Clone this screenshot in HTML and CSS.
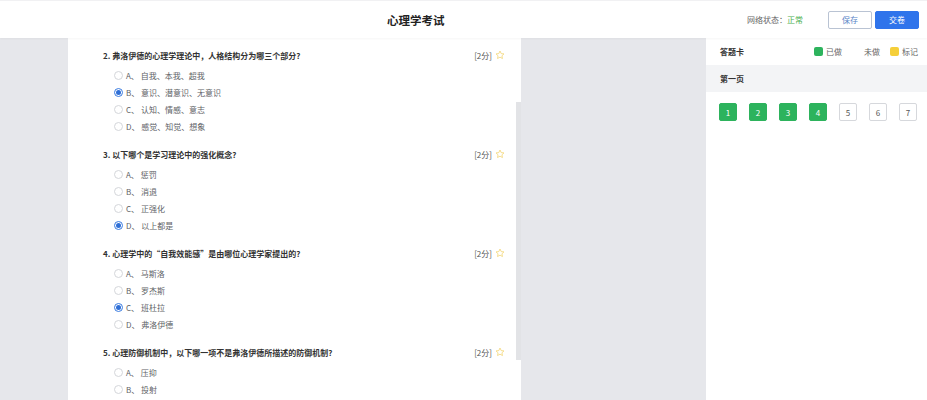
FILE: index.html
```html
<!DOCTYPE html>
<html lang="zh-CN">
<head>
  <meta charset="UTF-8">
  <title>心理学考试</title>
  <link rel="stylesheet" href="styles.css">
</head>
<body>
  <div class="header">
    <h1 class="title">心理学考试</h1>
    <div class="header-right">
      <span class="status">网络状态：<span class="ok">正常</span></span>
      <button class="btn btn-save">保存</button>
      <button class="btn btn-submit">交卷</button>
    </div>
  </div>

  <div class="main">
    <div class="side"></div>

    <div class="paper">
      <div class="paper-scroll" id="paper">
        <div class="question">
          <div class="q-head">
            <span class="q-title">1. 心理学是研究什么的科学?</span>
            <span class="score">[2分] <svg class="star" viewBox="0 0 24 24"><polygon points="12,2.5 14.9,8.6 21.5,9.4 16.6,13.9 17.9,20.5 12,17.2 6.1,20.5 7.4,13.9 2.5,9.4 9.1,8.6"/></svg></span>
          </div>
          <div class="option"><span class="radio"></span>A、 心理现象及其规律</div>
          <div class="option"><span class="radio checked"></span>B、 人的行为</div>
          <div class="option"><span class="radio"></span>C、 人的意识</div>
          <div class="option"><span class="radio"></span>D、 大脑的结构</div>
        </div>

        <div class="question">
          <div class="q-head">
            <span class="q-title">2. 弗洛伊德的心理学理论中，人格结构分为哪三个部分?</span>
            <span class="score">[2分] <svg class="star" viewBox="0 0 24 24"><polygon points="12,2.5 14.9,8.6 21.5,9.4 16.6,13.9 17.9,20.5 12,17.2 6.1,20.5 7.4,13.9 2.5,9.4 9.1,8.6"/></svg></span>
          </div>
          <div class="option"><span class="radio"></span>A、 自我、本我、超我</div>
          <div class="option"><span class="radio checked"></span>B、 意识、潜意识、无意识</div>
          <div class="option"><span class="radio"></span>C、 认知、情感、意志</div>
          <div class="option"><span class="radio"></span>D、 感觉、知觉、想象</div>
        </div>

        <div class="question">
          <div class="q-head">
            <span class="q-title">3. 以下哪个是学习理论中的强化概念?</span>
            <span class="score">[2分] <svg class="star" viewBox="0 0 24 24"><polygon points="12,2.5 14.9,8.6 21.5,9.4 16.6,13.9 17.9,20.5 12,17.2 6.1,20.5 7.4,13.9 2.5,9.4 9.1,8.6"/></svg></span>
          </div>
          <div class="option"><span class="radio"></span>A、 惩罚</div>
          <div class="option"><span class="radio"></span>B、 消退</div>
          <div class="option"><span class="radio"></span>C、 正强化</div>
          <div class="option"><span class="radio checked"></span>D、 以上都是</div>
        </div>

        <div class="question">
          <div class="q-head">
            <span class="q-title">4. 心理学中的“自我效能感”是由哪位心理学家提出的?</span>
            <span class="score">[2分] <svg class="star" viewBox="0 0 24 24"><polygon points="12,2.5 14.9,8.6 21.5,9.4 16.6,13.9 17.9,20.5 12,17.2 6.1,20.5 7.4,13.9 2.5,9.4 9.1,8.6"/></svg></span>
          </div>
          <div class="option"><span class="radio"></span>A、 马斯洛</div>
          <div class="option"><span class="radio"></span>B、 罗杰斯</div>
          <div class="option"><span class="radio checked"></span>C、 班杜拉</div>
          <div class="option"><span class="radio"></span>D、 弗洛伊德</div>
        </div>

        <div class="question">
          <div class="q-head">
            <span class="q-title">5. 心理防御机制中，以下哪一项不是弗洛伊德所描述的防御机制?</span>
            <span class="score">[2分] <svg class="star" viewBox="0 0 24 24"><polygon points="12,2.5 14.9,8.6 21.5,9.4 16.6,13.9 17.9,20.5 12,17.2 6.1,20.5 7.4,13.9 2.5,9.4 9.1,8.6"/></svg></span>
          </div>
          <div class="option"><span class="radio"></span>A、 压抑</div>
          <div class="option"><span class="radio"></span>B、 投射</div>
          <div class="option"><span class="radio"></span>C、 升华</div>
          <div class="option"><span class="radio"></span>D、 条件反射</div>
        </div>
      </div>
      <div class="scrollbar"><div class="thumb"></div></div>
    </div>

    <div class="gap"></div>

    <div class="card">
      <div class="card-head">
        <span class="card-title">答题卡</span>
        <div class="legend">
          <span class="legend-item"><span class="dot done"></span>已做</span>
          <span class="legend-item"><span class="dot todo"></span>未做</span>
          <span class="legend-item"><span class="dot mark"></span>标记</span>
        </div>
      </div>
      <div class="page-name">第一页</div>
      <div class="numbers">
        <span class="num done">1</span>
        <span class="num done">2</span>
        <span class="num done">3</span>
        <span class="num done">4</span>
        <span class="num">5</span>
        <span class="num">6</span>
        <span class="num">7</span>
      </div>
    </div>
  </div>

  <script>
    // first question is already scrolled past
    document.getElementById("paper").scrollTop = 90;
  </script>
</body>
</html>
```

FILE: styles.css
```css
* {
  box-sizing: border-box;
}
body {
  margin: 0;
  height: 400px;
  overflow: hidden;
  font-family: "Noto Sans CJK SC", "Noto Sans", sans-serif;
  font-size: 8px;
  color: #333;
  background: #e6e7eb;
}
.header {
  height: 38px;
  background: white;
  border-top: 1px solid #f1f1f3;
  display: flex;
  align-items: center;
  padding-right: 8px;
  box-shadow: 0 1px 2px rgba(0, 0, 0, 0.04);
  position: relative;
}
.title {
  margin: 0 0 0 387px;
  font-size: 11.5px;
  font-weight: bold;
  color: #222;
}
.header-right {
  margin-left: auto;
  display: flex;
  align-items: center;
}
.status {
  color: #666;
  margin-right: 22px;
}
.ok {
  color: #4caf50;
}
.btn {
  width: 44px;
  height: 18px;
  font-family: inherit;
  font-size: 8px;
  border-radius: 2px;
  padding: 0;
  margin-left: 3px;
  cursor: pointer;
}
.btn-save {
  background: white;
  color: #5a84c7;
  border: 1px solid #b9c3d3;
}
.btn-submit {
  background: #2f74eb;
  color: white;
  border: 1px solid #2f74eb;
}
.main {
  height: 362px;
  display: grid;
  grid-template-columns: 68px 453px 1fr 221px;
}
.paper {
  background: white;
  display: grid;
  grid-template-columns: 1fr 5px;
  min-height: 0;
}
.paper-scroll {
  overflow: hidden;
  padding: 0 11px 14px 35px;
}
.scrollbar {
  padding-top: 64px;
}
.thumb {
  height: 258px;
  background: #e2e3e6;
}
.question {
  height: 99px;
}
.q-head {
  display: flex;
  justify-content: space-between;
  align-items: center;
  height: 16px;
  margin-bottom: 4px;
}
.q-title {
  font-weight: bold;
  color: #333;
}
.score {
  color: #555;
  display: flex;
  align-items: center;
}
.star {
  width: 10px;
  height: 10px;
  margin-left: 3px;
  fill: none;
  stroke: #f2d36c;
  stroke-width: 1.8;
  stroke-linejoin: round;
}
.option {
  height: 17px;
  display: flex;
  align-items: center;
  padding-left: 11px;
  color: #606266;
}
.radio {
  width: 9px;
  height: 9px;
  border-radius: 50%;
  border: 1px solid #d4d6da;
  background: white;
  margin-right: 3px;
  display: flex;
  align-items: center;
  justify-content: center;
}
.radio.checked {
  border-color: #3a7be0;
}
.radio.checked::after {
  content: "";
  width: 5px;
  height: 5px;
  border-radius: 50%;
  background: #2f6fd6;
}
.card {
  background: white;
}
.card-head {
  height: 27px;
  display: flex;
  align-items: center;
  justify-content: space-between;
  padding: 0 9px 0 14px;
}
.card-title {
  font-weight: bold;
  color: #333;
}
.legend {
  display: flex;
  gap: 10px;
  color: #666;
}
.legend-item {
  display: flex;
  align-items: center;
}
.dot {
  width: 9px;
  height: 9px;
  border-radius: 2px;
  margin-right: 3px;
}
.dot.done {
  background: #2db35d;
}
.dot.todo {
  background: white;
}
.dot.mark {
  background: #f5cf3a;
}
.page-name {
  height: 27px;
  line-height: 27px;
  background: #f3f4f6;
  padding-left: 14px;
  font-weight: bold;
  color: #333;
}
.numbers {
  display: flex;
  gap: 12px;
  padding: 11px 0 0 13px;
}
.num {
  width: 18px;
  height: 18px;
  border: 1px solid #d6d8dc;
  border-radius: 2px;
  display: flex;
  align-items: center;
  justify-content: center;
  color: #555;
}
.num.done {
  background: #2db35d;
  border-color: #2db35d;
  color: white;
}
```
